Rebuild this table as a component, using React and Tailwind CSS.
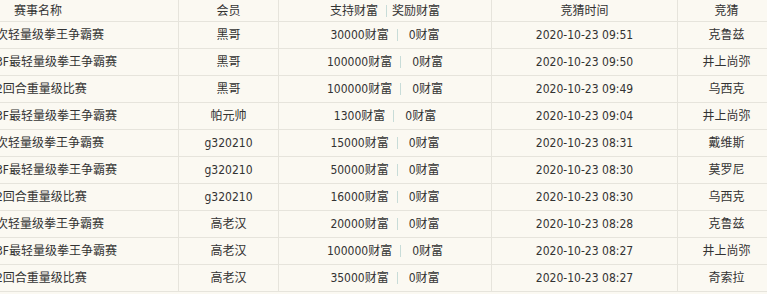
const rows = [
  ["次轻量级拳王争霸赛", "黑哥", "30000", "2020-10-23 09:51", "克鲁兹"],
  ["3F最轻量级拳王争霸赛", "黑哥", "100000", "2020-10-23 09:50", "井上尚弥"],
  ["2回合重量级比赛", "黑哥", "100000", "2020-10-23 09:49", "乌西克"],
  ["3F最轻量级拳王争霸赛", "帕元帅", "1300", "2020-10-23 09:04", "井上尚弥"],
  ["次轻量级拳王争霸赛", "g320210", "15000", "2020-10-23 08:31", "戴维斯"],
  ["3F最轻量级拳王争霸赛", "g320210", "50000", "2020-10-23 08:30", "莫罗尼"],
  ["2回合重量级比赛", "g320210", "16000", "2020-10-23 08:30", "乌西克"],
  ["次轻量级拳王争霸赛", "高老汉", "20000", "2020-10-23 08:28", "克鲁兹"],
  ["3F最轻量级拳王争霸赛", "高老汉", "100000", "2020-10-23 08:27", "井上尚弥"],
  ["2回合重量级比赛", "高老汉", "35000", "2020-10-23 08:27", "奇索拉"],
]

const cell = "border-r border-b border-[#e6e4dc] flex items-center whitespace-nowrap overflow-hidden"

export default function App() {
  return (
    <div className="w-[767px] h-[294px] overflow-hidden bg-[#fbf9f2] text-[#333] text-[12px] font-['DejaVu_Sans_Condensed','Noto_Sans','Noto_Sans_CJK_SC',sans-serif]">
      <div className="grid w-[776px] grid-cols-[179px_100px_213px_186px_98px]">
        {/* 表头 */}
        <div className={`${cell} h-[22px] pl-[14px]`}>赛事名称</div>
        <div className={`${cell} h-[22px] justify-center`}>会员</div>
        <div className={`${cell} h-[22px] justify-center`}>
          支持财富
          <span className="inline-block w-px h-[12px] bg-[#c8dcd8] ml-[8px] mr-[5px]"></span>
          奖励财富
        </div>
        <div className={`${cell} h-[22px] justify-center`}>竞猜时间</div>
        <div className={`${cell} h-[22px] justify-center`}>竞猜</div>

        {rows.map((r, i) => (
          <div key={i} className="contents">
            <div className={`${cell} h-[27px]`}>
              <span className="-ml-[4px]">{r[0]}</span>
            </div>
            <div className={`${cell} h-[27px] justify-center`}>{r[1]}</div>
            <div className={`${cell} h-[27px] justify-center`}>
              {r[2]}财富
              <span className="inline-block w-px h-[12px] bg-[#c8dcd8] ml-[8px] mr-[11px]"></span>
              0财富
            </div>
            <div className={`${cell} h-[27px] justify-center`}>{r[3]}</div>
            <div className={`${cell} h-[27px] justify-center`}>{r[4]}</div>
          </div>
        ))}
      </div>
    </div>
  )
}
